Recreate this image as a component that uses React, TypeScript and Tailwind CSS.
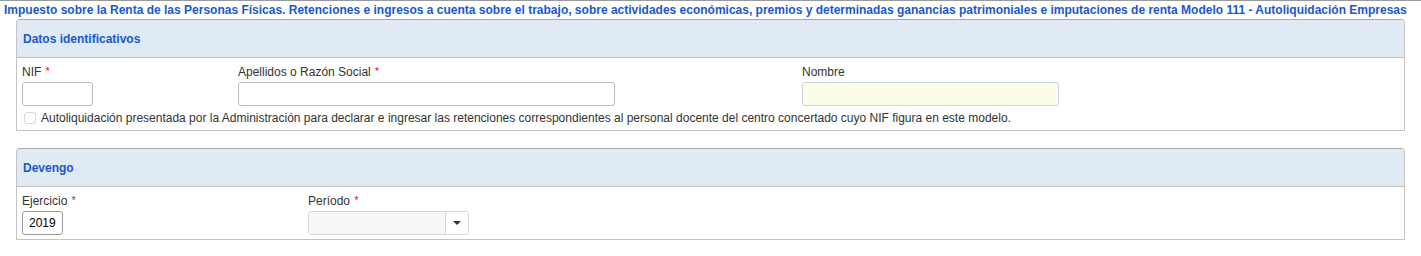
import { ReactNode } from "react";

function Req() {
  return <span className="text-[#e00] text-[10px] align-top ml-[1px]">*</span>;
}

function Panel({ title, children }: { title: string; children: ReactNode }) {
  return (
    <div className="mx-[16px] border border-[#c4c4c4] border-t-[#a8a8a8] rounded-t-[4px] bg-white">
      <div className="h-[38px] bg-[#dfeaf4] border-b border-[#c0c0c0] rounded-t-[3px] flex items-center px-[6px] text-[12px] font-bold text-[#1858cf]">
        {title}
      </div>
      {children}
    </div>
  );
}

export default function App() {
  return (
    <div className="w-[1421px] h-[256px] bg-white text-[#333] font-['Liberation_Sans',Arial,sans-serif] text-[12px] border-t border-[#9a9a9a]">
      <div className="h-[18px] pl-[4px] pt-[2px] leading-[14px] text-[12px] font-bold text-[#1858cf] whitespace-nowrap">
        Impuesto sobre la Renta de las Personas Físicas. Retenciones e ingresos a cuenta sobre el trabajo, sobre actividades económicas, premios y determinadas ganancias patrimoniales e imputaciones de renta Modelo 111 - Autoliquidación Empresas
      </div>
      <Panel title="Datos identificativos">
        <div className="px-[5px] pt-[6px] pb-[5px]">
          <div className="flex">
            <div className="w-[216px]">
              <div className="h-[18px] leading-[16px]">
                NIF <Req />
              </div>
              <div className="w-[71px] h-[24px] border border-[#bdbdbd] rounded-[3px] bg-white" />
            </div>
            <div className="w-[564px]">
              <div className="h-[18px] leading-[16px]">
                Apellidos o Razón Social <Req />
              </div>
              <div className="w-[377px] h-[24px] border border-[#bdbdbd] rounded-[3px] bg-white" />
            </div>
            <div>
              <div className="h-[18px] leading-[16px]">Nombre</div>
              <div className="w-[257px] h-[24px] border border-[#c8d4e4] rounded-[3px] bg-[#fcfde8]" />
            </div>
          </div>
          <div className="flex items-center mt-[5px] h-[14px]">
            <div className="ml-[2px] w-[12px] h-[12px] border border-[#d8d8d8] rounded-[3px] bg-white" />
            <span className="ml-[5px]">
              Autoliquidación presentada por la Administración para declarar e ingresar las retenciones correspondientes al personal docente del centro concertado cuyo NIF figura en este modelo.
            </span>
          </div>
        </div>
      </Panel>
      <div className="h-[17px]" />
      <Panel title="Devengo">
        <div className="px-[5px] pt-[6px] pb-[4px] flex">
          <div className="w-[286px]">
            <div className="h-[18px] leading-[16px]">
              Ejercicio <Req />
            </div>
            <div className="w-[41px] h-[24px] border border-[#9a9a9a] rounded-[3px] bg-white flex items-center px-[6px] text-[12px] text-black">
              2019
            </div>
          </div>
          <div>
            <div className="h-[18px] leading-[16px]">
              Período <Req />
            </div>
            <div className="flex w-[161px] h-[24px] border border-[#d6d6d6] rounded-[3px] overflow-hidden">
              <div className="flex-1 bg-[#f7f7f7]" />
              <div className="w-[23px] border-l border-[#d6d6d6] bg-white flex items-center justify-center">
                <div className="w-0 h-0 border-l-[4px] border-r-[4px] border-t-[4px] border-l-transparent border-r-transparent border-t-[#333]" />
              </div>
            </div>
          </div>
        </div>
      </Panel>
    </div>
  );
}
